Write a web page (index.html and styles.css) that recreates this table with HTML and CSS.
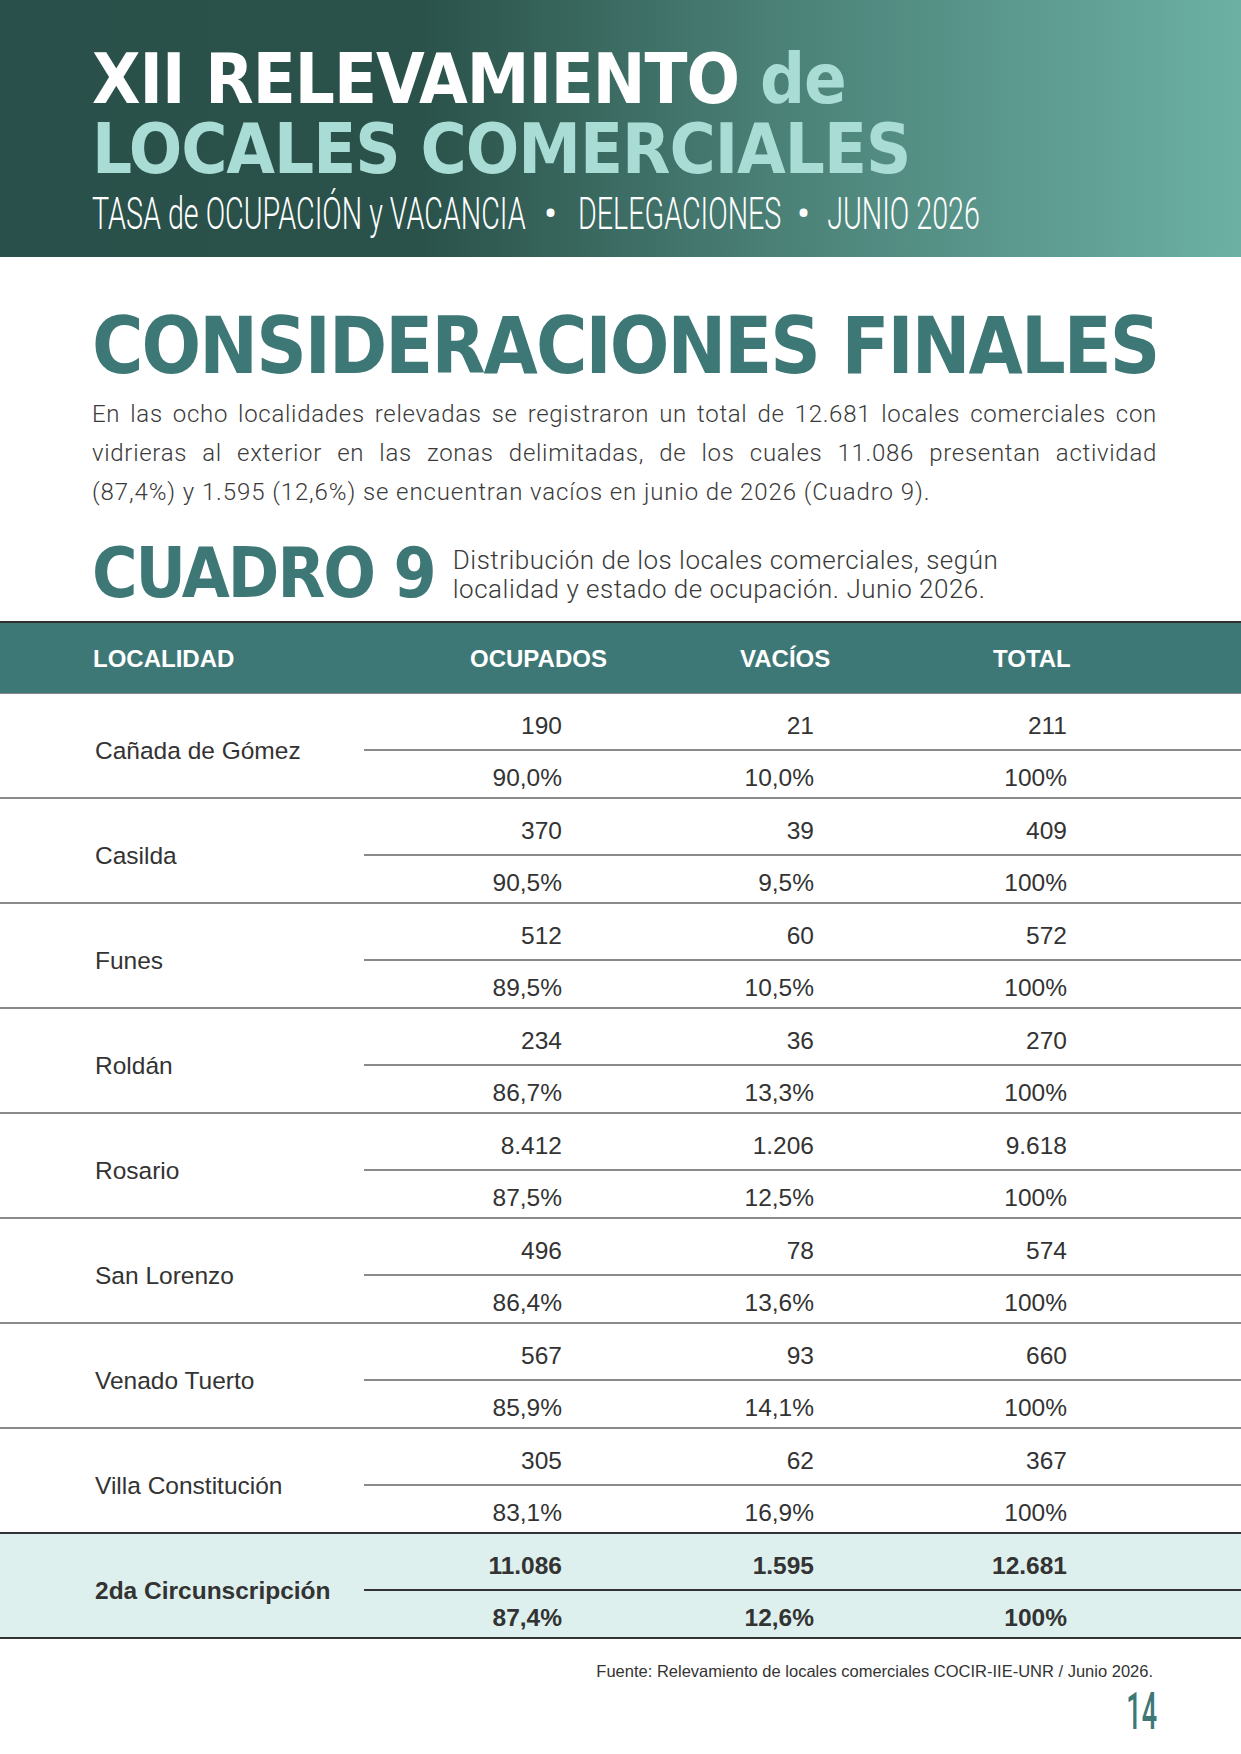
FILE: index.html
```html
<!DOCTYPE html>
<html lang="es">
<head>
<meta charset="utf-8">
<title>XII Relevamiento de Locales Comerciales</title>
<link rel="stylesheet" href="styles.css">
</head>
<body>
<header class="banner">
  <h1 class="title">
    <span class="title-line"><span class="title-part">XII RELEVAMIENTO</span> <span class="title-part accent">de</span></span>
    <span class="title-line"><span class="title-part accent">LOCALES COMERCIALES</span></span>
  </h1>
  <p class="subtitle"><span class="subtitle-inner">TASA de OCUPACIÓN y VACANCIA<span class="dot">•</span>DELEGACIONES<span class="dot dot--second">•</span>JUNIO 2026</span></p>
</header>

<main class="content">
  <h2 class="section-title">CONSIDERACIONES FINALES</h2>
  <p class="intro">
    <span class="line just">En las ocho localidades relevadas se registraron un total de 12.681 locales comerciales con</span>
    <span class="line just">vidrieras al exterior en las zonas delimitadas, de los cuales 11.086 presentan actividad</span>
    <span class="line">(87,4%) y 1.595 (12,6%) se encuentran vacíos en junio de 2026 (Cuadro 9).</span>
  </p>
  <div class="cuadro-head">
    <h3 class="cuadro-title">CUADRO 9</h3>
    <p class="cuadro-caption">Distribución de los locales comerciales, según<br>localidad y estado de ocupación. Junio 2026.</p>
  </div>
</main>

<section class="table">
  <div class="thead">
    <div class="th th-first">LOCALIDAD</div>
    <div class="th">OCUPADOS</div>
    <div class="th">VACÍOS</div>
    <div class="th">TOTAL</div>
  </div>

  <div class="group">
    <div class="label">Cañada de Gómez</div>
    <div class="num top">190</div><div class="num top">21</div><div class="num top">211</div><div class="num top"></div>
    <div class="num">90,0%</div><div class="num">10,0%</div><div class="num">100%</div><div class="num"></div>
  </div>
  <div class="group">
    <div class="label">Casilda</div>
    <div class="num top">370</div><div class="num top">39</div><div class="num top">409</div><div class="num top"></div>
    <div class="num">90,5%</div><div class="num">9,5%</div><div class="num">100%</div><div class="num"></div>
  </div>
  <div class="group">
    <div class="label">Funes</div>
    <div class="num top">512</div><div class="num top">60</div><div class="num top">572</div><div class="num top"></div>
    <div class="num">89,5%</div><div class="num">10,5%</div><div class="num">100%</div><div class="num"></div>
  </div>
  <div class="group">
    <div class="label">Roldán</div>
    <div class="num top">234</div><div class="num top">36</div><div class="num top">270</div><div class="num top"></div>
    <div class="num">86,7%</div><div class="num">13,3%</div><div class="num">100%</div><div class="num"></div>
  </div>
  <div class="group">
    <div class="label">Rosario</div>
    <div class="num top">8.412</div><div class="num top">1.206</div><div class="num top">9.618</div><div class="num top"></div>
    <div class="num">87,5%</div><div class="num">12,5%</div><div class="num">100%</div><div class="num"></div>
  </div>
  <div class="group">
    <div class="label">San Lorenzo</div>
    <div class="num top">496</div><div class="num top">78</div><div class="num top">574</div><div class="num top"></div>
    <div class="num">86,4%</div><div class="num">13,6%</div><div class="num">100%</div><div class="num"></div>
  </div>
  <div class="group">
    <div class="label">Venado Tuerto</div>
    <div class="num top">567</div><div class="num top">93</div><div class="num top">660</div><div class="num top"></div>
    <div class="num">85,9%</div><div class="num">14,1%</div><div class="num">100%</div><div class="num"></div>
  </div>
  <div class="group group--before-total">
    <div class="label">Villa Constitución</div>
    <div class="num top">305</div><div class="num top">62</div><div class="num top">367</div><div class="num top"></div>
    <div class="num">83,1%</div><div class="num">16,9%</div><div class="num">100%</div><div class="num"></div>
  </div>
  <div class="group group--total">
    <div class="label">2da Circunscripción</div>
    <div class="num top">11.086</div><div class="num top">1.595</div><div class="num top">12.681</div><div class="num top"></div>
    <div class="num">87,4%</div><div class="num">12,6%</div><div class="num">100%</div><div class="num"></div>
  </div>
</section>

<footer class="page-foot">
  <p class="source">Fuente: Relevamiento de locales comerciales COCIR-IIE-UNR / Junio 2026.</p>
  <p class="page-num"><span class="page-num-inner">14</span></p>
</footer>
</body>
</html>
```

FILE: styles.css
```css
* { box-sizing: border-box; }

html, body {
  margin: 0;
  padding: 0;
  background: #ffffff;
}

body {
  width: 1241px;
  overflow-x: hidden;
  font-family: "Liberation Sans", Arial, sans-serif;
  color: #333333;
}

/* ---------- Banner ---------- */
.banner {
  height: 257px;
  padding: 44px 0 0 92px;
  overflow: hidden;
  background: linear-gradient(90deg, #29504a 0%, #2a524a 34%, #4a8076 62%, #6cb0a4 100%);
}

.title {
  margin: 0;
  font-family: "DejaVu Sans Condensed", "DejaVu Sans", sans-serif;
  font-stretch: condensed;
  font-weight: bold;
  font-size: 70px;
  line-height: 70px;
  letter-spacing: -1px;
  color: #ffffff;
}

.title-line {
  display: block;
  height: 70px;
  white-space: nowrap;
}

.title-part {
  display: inline-block;
  height: 70px;
  line-height: 70px;
  vertical-align: top;
}

.accent {
  color: #a8dcd4;
}

.subtitle {
  margin: 8px 0 0;
  height: 44px;
  width: 1149px;
  font-family: "Roboto", sans-serif;
  font-weight: 300;
  font-size: 44px;
  line-height: 44px;
  color: #ffffff;
  white-space: nowrap;
}

.subtitle-inner {
  display: inline-block;
  transform: scaleX(0.652);
  transform-origin: left center;
}

.dot {
  display: inline-block;
  margin: 0 35px 0 31px;
  transform: scaleX(1.5);
}

.dot--second {
  margin: 0 29px 0 27px;
}

/* ---------- Content ---------- */
.content {
  padding: 0 84px 0 92px;
}

.section-title {
  margin: 50px 0 0;
  font-family: "DejaVu Sans Condensed", "DejaVu Sans", sans-serif;
  font-stretch: condensed;
  font-weight: bold;
  font-size: 78px;
  line-height: 78px;
  letter-spacing: -1.9px;
  color: #3e7876;
  white-space: nowrap;
}

.intro {
  margin: 10px 0 0;
  font-family: "Roboto", sans-serif;
  font-weight: 300;
  font-size: 24px;
  line-height: 39px;
  letter-spacing: 0.9px;
  color: #3a3a3a;
}

.intro .line {
  display: block;
  white-space: nowrap;
}

.intro .just {
  text-align: justify;
  text-align-last: justify;
  letter-spacing: 0.7px;
}

.cuadro-head {
  display: flex;
  align-items: flex-start;
  margin-top: 27px;
}

.cuadro-title {
  margin: 0;
  font-family: "DejaVu Sans Condensed", "DejaVu Sans", sans-serif;
  font-stretch: condensed;
  font-weight: bold;
  font-size: 69px;
  line-height: 69px;
  letter-spacing: -2px;
  color: #3e7876;
  white-space: nowrap;
}

.cuadro-caption {
  margin: 7px 0 0 18px;
  font-family: "Roboto", sans-serif;
  font-weight: 300;
  font-size: 26px;
  line-height: 29px;
  letter-spacing: 0.5px;
  color: #3a3a3a;
}

/* ---------- Table ---------- */
.table {
  margin-top: 13px;
}

.thead {
  display: grid;
  grid-template-columns: 470px 270px 253px 1fr;
  height: 73px;
  padding-top: 2px;
  background: #3e7876;
  border-top: 2px solid #2f2f2f;
  border-bottom: 1px solid #8a8a8a;
  font-weight: bold;
  font-size: 24px;
  line-height: 68px;
  color: #ffffff;
}

.th-first {
  padding-left: 93px;
}

.group {
  display: grid;
  grid-template-columns: 364px 198px 252px 253px 1fr;
  grid-template-rows: 57px 46px;
  border-bottom: 2px solid #8a8a8a;
  font-size: 24.5px;
  color: #333333;
}

.group--before-total {
  border-bottom-color: #333333;
}

.label {
  grid-row: 1 / 3;
  display: flex;
  align-items: center;
  padding: 10px 0 0 95px;
}

.num {
  text-align: right;
  padding-top: 8px;
  line-height: 38px;
}

.num.top {
  padding-top: 9px;
  line-height: 46px;
  border-bottom: 2px solid #8a8a8a;
}

.group--total {
  background: #ddf0ee;
  border-bottom-color: #333333;
  font-weight: bold;
}

.group--total .num.top {
  border-bottom-color: #333333;
}

/* ---------- Footer ---------- */
.page-foot {
  padding: 0 84px 0 0;
  text-align: right;
}

.source {
  margin: 23px 4px 0 0;
  font-size: 16.5px;
  line-height: 18px;
  color: #333333;
}

.page-num {
  margin: 6px 0 0;
  font-family: "Roboto", sans-serif;
  font-weight: 500;
  font-size: 52px;
  line-height: 52px;
  color: #3e7876;
}

.page-num-inner {
  display: inline-block;
  transform: scaleX(0.52);
  transform-origin: right center;
}
```
